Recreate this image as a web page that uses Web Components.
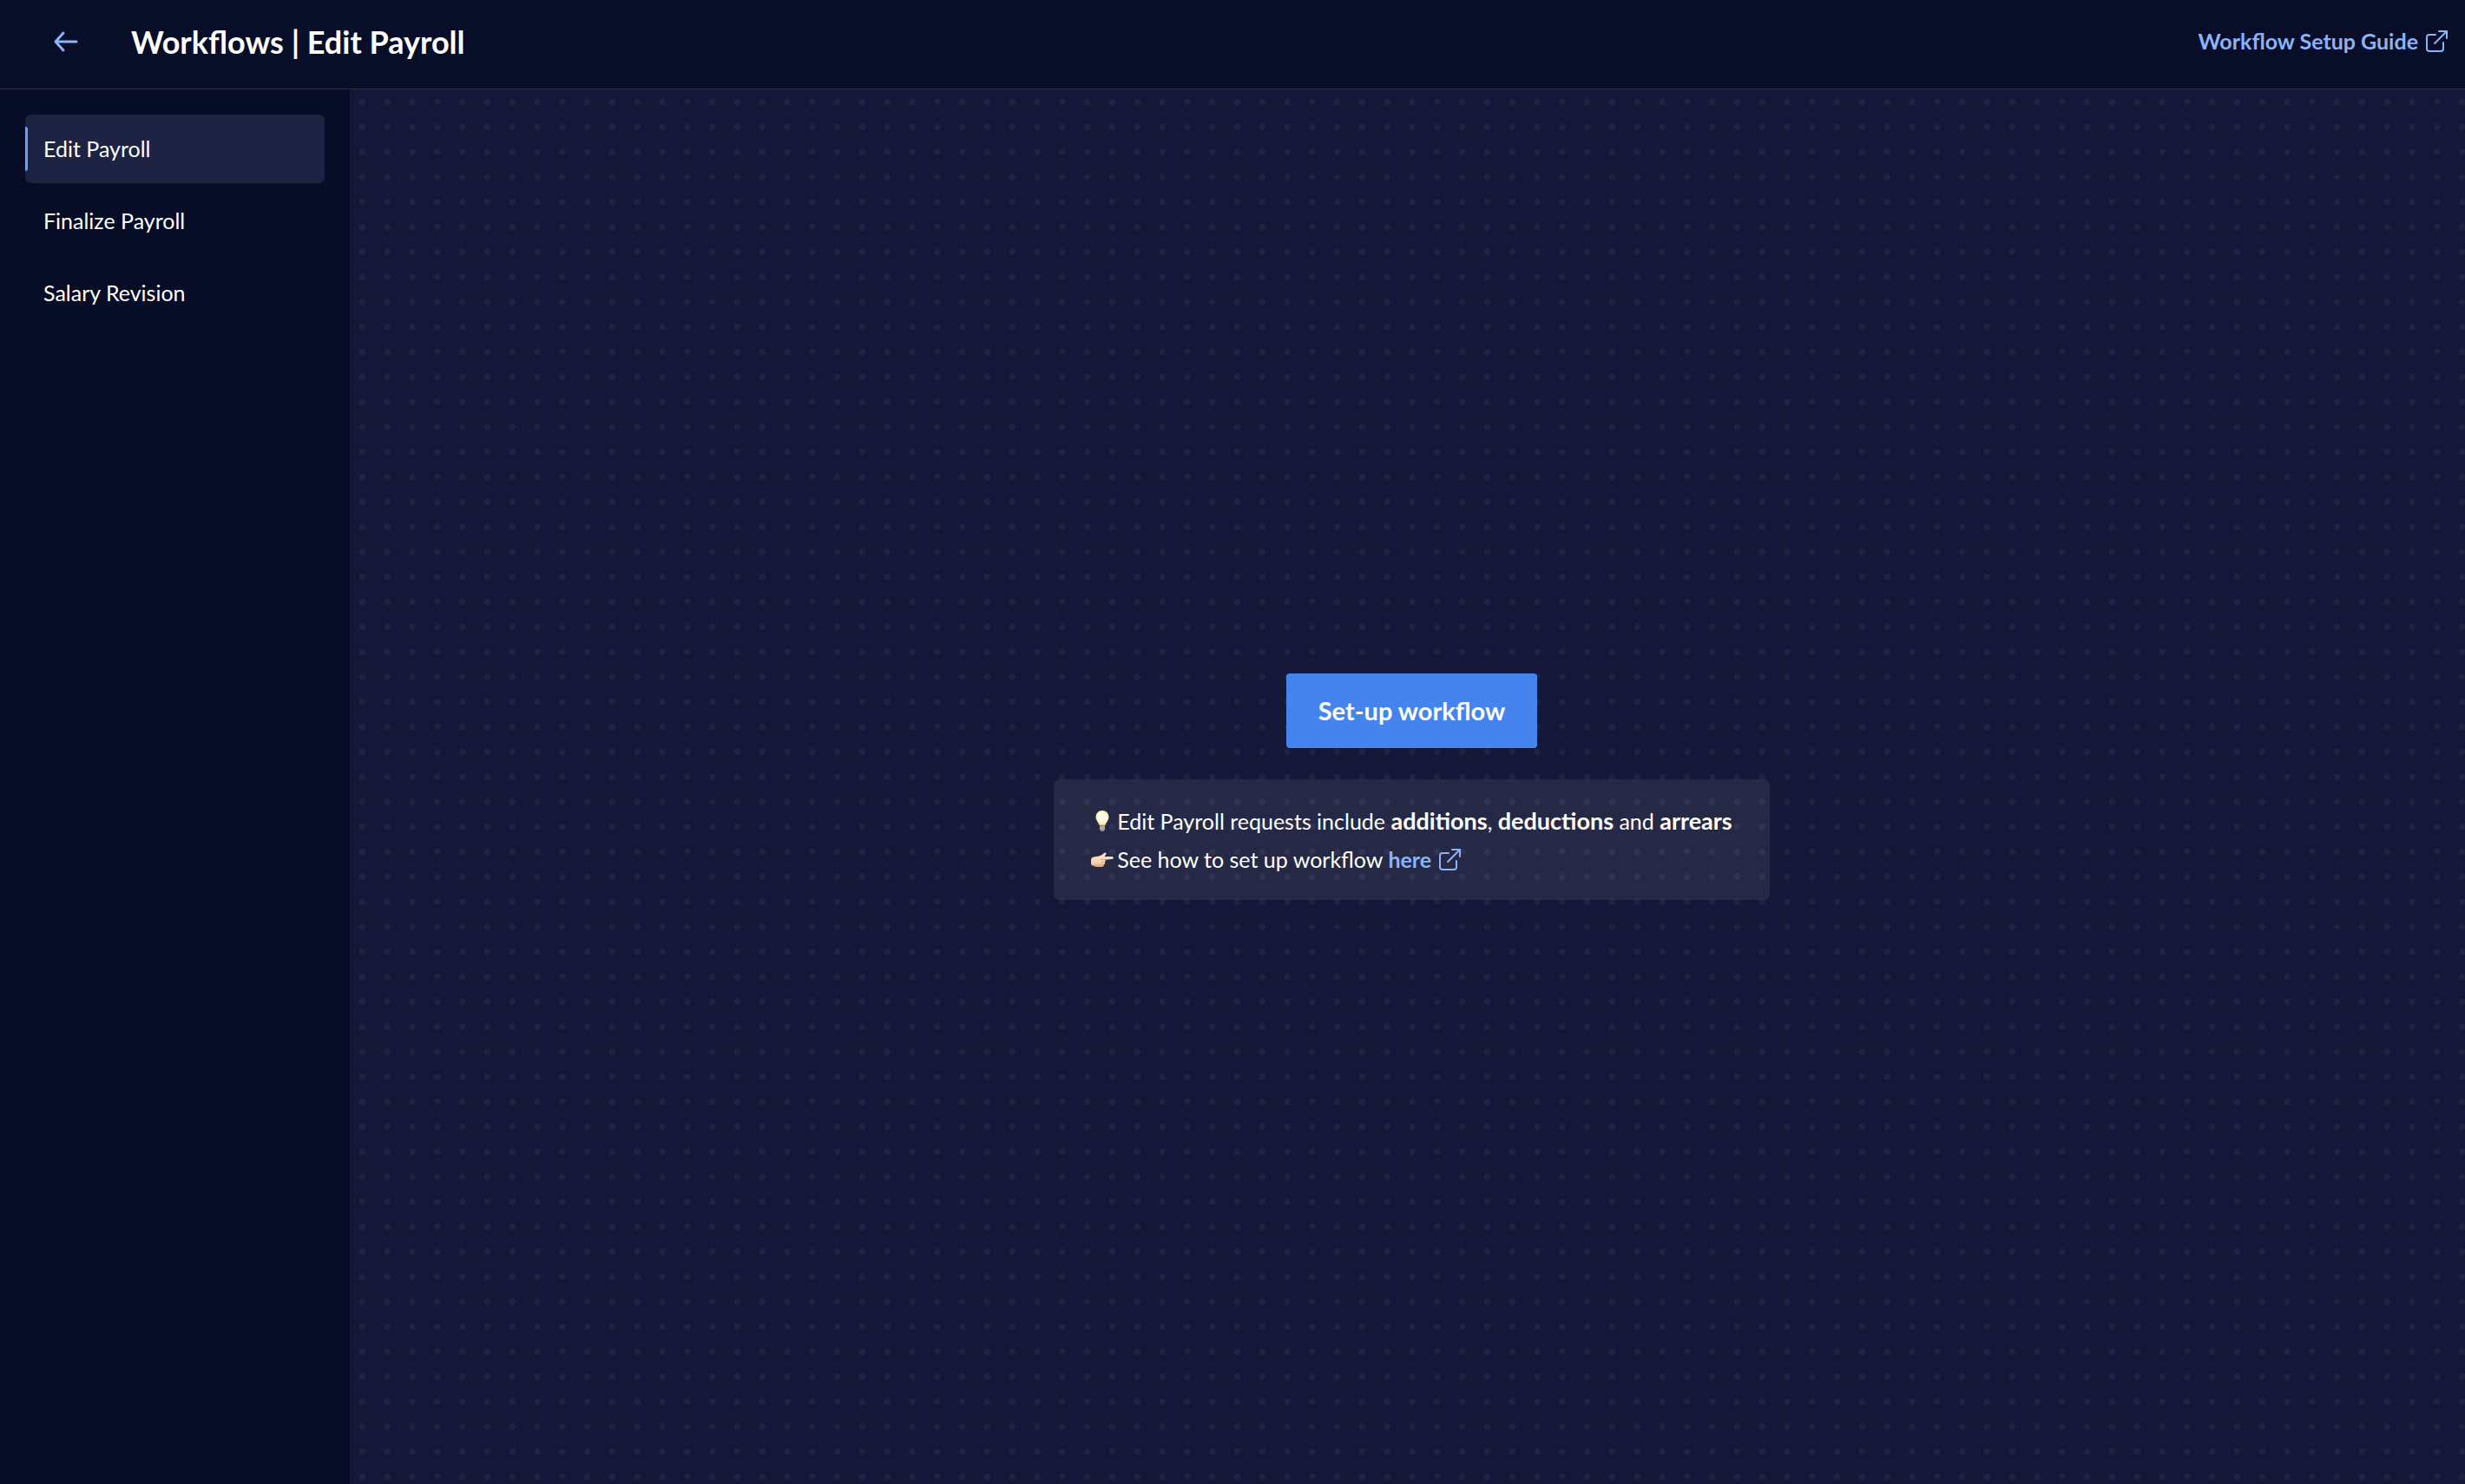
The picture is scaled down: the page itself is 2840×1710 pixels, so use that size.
<!DOCTYPE html>
<html lang="en">
<head>
<meta charset="utf-8">
<title>Workflows | Edit Payroll</title>
<style>
    html, body {
        height: 100%;
        margin: 0;
    }
    body {
        font-family: Lato, "Noto Sans", sans-serif;
        font-size: 25px;
        line-height: 45px;
        color: #fff;
        background: #070c27;
        --link: #8ab4f8;
        --primary: #4684ed;
        --surface: #080d28;
        --canvas: #141737;
        --dot: #1f2343;
        --selected: #1f2343;
        --line: #2c2f45;
    }
</style>
</head>
<body>
<workflow-app>
    <app-header slot="header" heading="Workflows | Edit Payroll">
        <external-link href="#guide">Workflow Setup Guide</external-link>
    </app-header>
    <side-nav slot="nav">
        <nav-item href="#edit" selected>Edit Payroll</nav-item>
        <nav-item href="#finalize">Finalize Payroll</nav-item>
        <nav-item href="#salary">Salary Revision</nav-item>
    </side-nav>
    <flow-canvas>
        <primary-button>Set-up workflow</primary-button>
        <info-card>
            <info-line icon="bulb">Edit Payroll requests include <b>additions</b>, <b>deductions</b> and <b>arrears</b></info-line>
            <info-line icon="point">See how to set up workflow <external-link href="#help">here</external-link></info-line>
        </info-card>
    </flow-canvas>
</workflow-app>

<script>
const define = (name, html) => {
    customElements.define(name, class extends HTMLElement {
        constructor() {
            super();
            this.attachShadow({ mode: 'open' });
            this.shadowRoot.innerHTML = typeof html === 'function' ? html(this) : html;
        }
    });
};

define('workflow-app', `
    <style>
        :host {
            display: flex;
            flex-direction: column;
            min-height: 100%;
        }
        .body {
            display: flex;
            flex: 1;
        }
    </style>
    <slot name="header"></slot>
    <div class="body">
        <slot name="nav"></slot>
        <slot></slot>
    </div>
`);

define('app-header', (el) => `
    <style>
        :host {
            display: block;
            background: var(--surface);
            border-bottom: 1px solid var(--line);
        }
        header {
            display: flex;
            align-items: center;
            height: 95px;
            padding: 0 20px 7px 56px;
        }
        button {
            display: flex;
            padding: 4px;
            border: 0;
            background: none;
            color: var(--link);
        }
        svg {
            width: 32px;
            height: 32px;
        }
        h1 {
            flex: 1;
            margin: 0 0 0 55px;
            font-size: 36px;
            font-weight: 700;
            line-height: 48px;
        }
    </style>
    <header>
        <button type="button" aria-label="Back">
            <svg viewBox="0 0 32 32" fill="none" stroke="currentColor" stroke-width="3" stroke-linecap="round" stroke-linejoin="round">
                <path d="M28 16H4M13 6L4 16l9 10"/>
            </svg>
        </button>
        <h1>${el.getAttribute('heading')}</h1>
        <slot></slot>
    </header>
`);

define('external-link', (el) => `
    <style>
        :host {
            display: inline-block;
        }
        a {
            display: flex;
            align-items: center;
            gap: 9px;
            color: var(--link);
            font-weight: 700;
            text-decoration: none;
        }
        svg {
            width: 25px;
            height: 25px;
        }
    </style>
    <a href="${el.getAttribute('href')}">
        <slot></slot>
        <svg viewBox="0 0 25 25" fill="none" stroke="currentColor" stroke-width="2" stroke-linecap="round" aria-hidden="true">
            <path d="M11 5H4a3 3 0 0 0-3 3v13a3 3 0 0 0 3 3h13a3 3 0 0 0 3-3v-7M10 15L23 2M15 1h9v8"/>
        </svg>
    </a>
`);

define('side-nav', `
    <style>
        :host {
            display: block;
            flex: none;
            width: 403px;
            box-sizing: border-box;
            padding: 29px;
        }
        nav {
            display: flex;
            flex-direction: column;
            gap: 4px;
        }
    </style>
    <nav><slot></slot></nav>
`);

define('nav-item', (el) => `
    <style>
        :host {
            display: block;
        }
        a {
            display: flex;
            align-items: center;
            height: 79px;
            border-radius: 7px;
            color: inherit;
            text-decoration: none;
        }
        a::before {
            content: "";
            width: 3px;
            height: 51px;
            margin-right: 18px;
            border-radius: 0 3px 3px 0;
        }
        :host([selected]) a {
            background: var(--selected);
        }
        :host([selected]) a::before {
            background: #6ba1f7;
        }
    </style>
    <a href="${el.getAttribute('href')}"><slot></slot></a>
`);

define('flow-canvas', `
    <style>
        :host {
            display: grid;
            flex: 1;
            background: var(--canvas);
        }
        svg, main {
            grid-area: 1 / 1;
        }
        svg {
            width: 100%;
            height: 100%;
        }
        circle {
            fill: var(--dot);
        }
        main {
            display: flex;
            flex-direction: column;
            align-items: center;
            justify-content: center;
            gap: 36px;
            padding-left: 10px;
            z-index: 1;
        }
    </style>
    <svg aria-hidden="true">
        <pattern id="dots" width="16" height="16" patternUnits="userSpaceOnUse" patternTransform="scale(1.8)">
            <circle cx="8" cy="8" r="2"/>
        </pattern>
        <rect width="100%" height="100%" fill="url(#dots)"/>
    </svg>
    <main><slot></slot></main>
`);

define('primary-button', `
    <style>
        :host {
            display: block;
        }
        button {
            display: block;
            height: 86px;
            padding: 0 37px 2px;
            border: 0;
            border-radius: 4px;
            background: var(--primary);
            color: #fff;
            font: 700 29px Lato, "Noto Sans", sans-serif;
        }
    </style>
    <button type="button"><slot></slot></button>
`);

define('info-card', `
    <style>
        :host {
            display: block;
            padding: 25px 43px 24px;
            border-radius: 7px;
            background: rgba(255, 255, 255, 0.08);
        }
    </style>
    <slot></slot>
`);

const icons = {
    bulb: `
        <defs>
            <radialGradient id="glass" cx="50%" cy="45%" r="55%">
                <stop offset="0.3" stop-color="#fffdf0"/>
                <stop offset="0.8" stop-color="#fdf3bf"/>
                <stop offset="1" stop-color="#dcbf6a"/>
            </radialGradient>
        </defs>
        <path d="M13 1C8.500 1 5.500 4.300 5.500 8.500c0 3.500 2.700 5.200 3.800 9.500h7.400c1.100-4.300 3.800-6 3.800-9.500C20.500 4.300 17.500 1 13 1z" fill="url(#glass)"/>
        <path d="M10 18h6v5l-1.500 2h-3L10 23z" fill="#8d8d88"/>
        <path d="M10 20h6M10 22h6" stroke="#c9c9c2"/>`,
    point: `
        <defs>
            <linearGradient id="skin" x1="0" y1="0" x2="0" y2="1">
                <stop offset="0" stop-color="#fde3cd"/>
                <stop offset="0.7" stop-color="#f8d2b5"/>
                <stop offset="1" stop-color="#dd9c78"/>
            </linearGradient>
        </defs>
        <path d="M0 13c0-2 1-3 3-3.500L9 8.500c2.500-.5 4.500-2.300 6.500-3.700 1.500-1 2.700.4 1.700 1.700L15.500 9H24c2.500 0 2.500 3 0 3l-8 .7c1 .8.800 2.300-.3 2.800.8 1.200.200 2.600-.9 3 .2 1.500-.8 2.500-2.300 2.500H7c-2 0-3-1-5-1.500-1.500-.4-2-1-2-2.500z" fill="url(#skin)"/>
        <path d="M11 12.500l5 .2M11.500 15.700l4-.2M11.500 18.500h3" stroke="#dfa37f" fill="none"/>`
};

define('info-line', (el) => `
    <style>
        :host {
            display: flex;
            align-items: center;
            gap: 4px;
            height: 45px;
        }
        svg {
            flex: none;
            width: 26px;
            height: 26px;
        }
        ::slotted(b) {
            font-size: 27px;
            font-weight: 700;
        }
    </style>
    <svg viewBox="0 0 26 26" aria-hidden="true">${icons[el.getAttribute('icon')]}</svg>
    <span><slot></slot></span>
`);
</script>
</body>
</html>
